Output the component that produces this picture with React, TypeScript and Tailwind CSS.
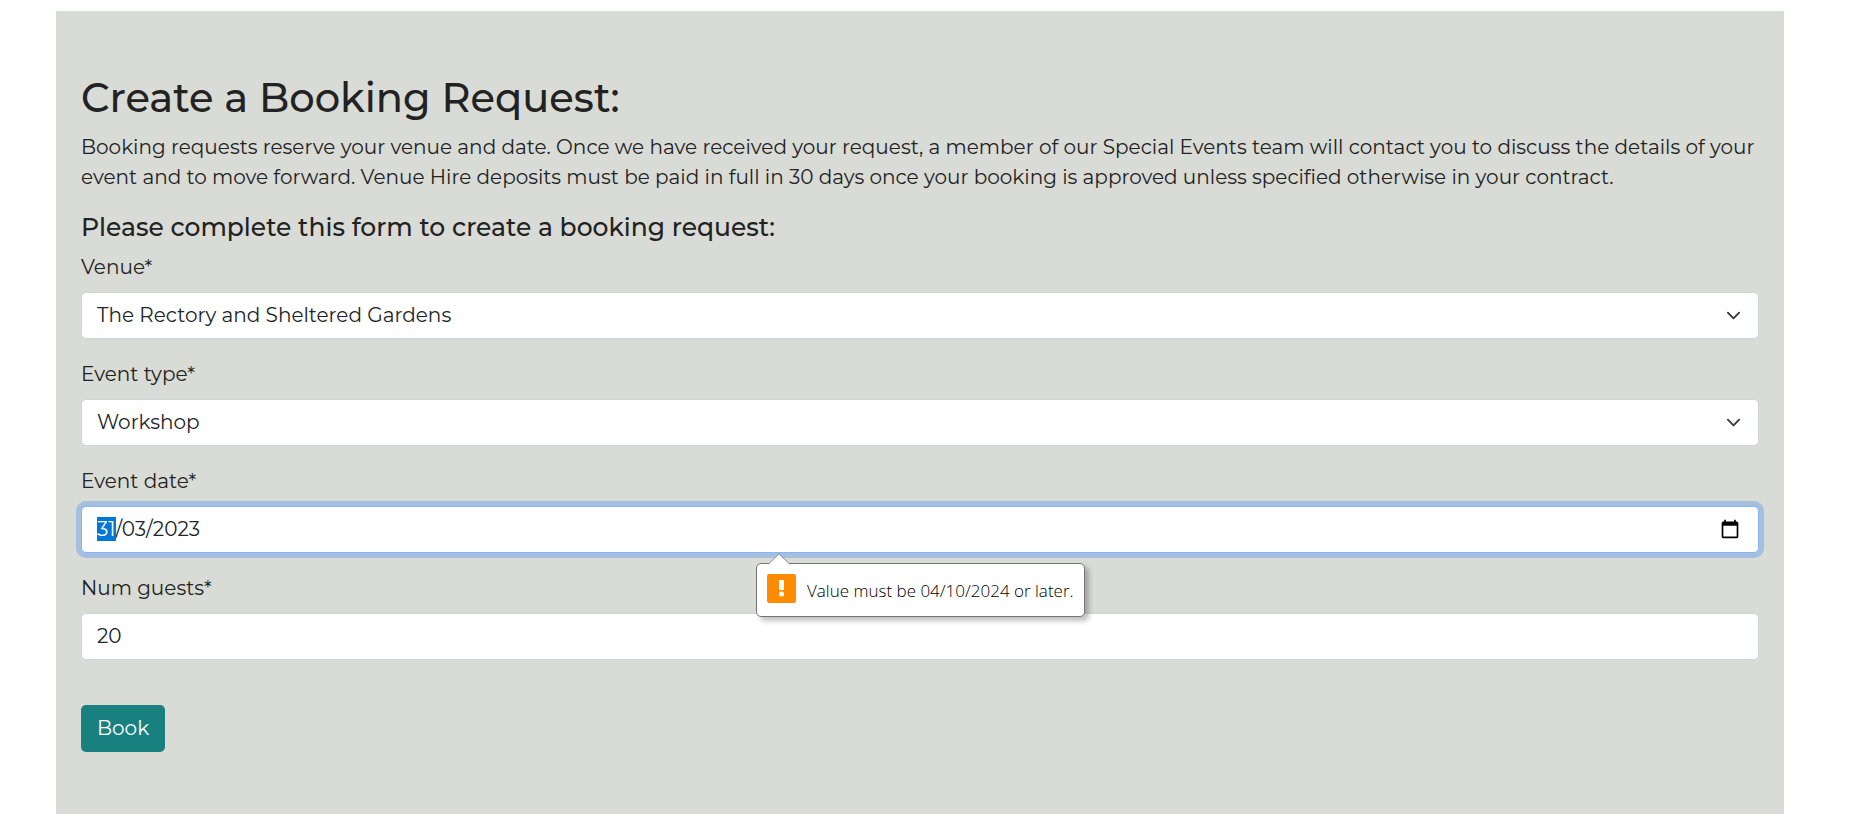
import { useEffect, useRef } from "react";
import type { ReactNode } from "react";

const controlClass =
  "h-[47px] w-full rounded-[5px] border border-[#ced4da] bg-white px-[15px] pb-[2px] text-xl font-normal text-[#212529] outline-none";

function Field({ id, label, children }: { id: string; label: string; children: ReactNode }) {
  return (
    <div className="relative mb-5">
      <label htmlFor={id} className="mb-[10px] block text-xl leading-[30px] font-normal">
        {label}
      </label>
      {children}
    </div>
  );
}

function SelectBox({ id, options }: { id: string; options: string[] }) {
  return (
    <div className="relative">
      <select id={id} className={`${controlClass} appearance-none`}>
        {options.map((option) => (
          <option key={option}>{option}</option>
        ))}
      </select>
      <svg
        viewBox="0 0 16 16"
        aria-hidden="true"
        className="pointer-events-none absolute top-4 right-[18px] size-[15px]"
      >
        <path d="M2 5l6 6 6-6" fill="none" stroke="#343a40" strokeWidth="2" strokeLinecap="round" strokeLinejoin="round" />
      </svg>
    </div>
  );
}

function ValidationBubble({ message }: { message: string }) {
  return (
    <div
      role="alert"
      className="absolute top-full left-[calc(50%-164px)] z-10 mt-[10px] flex h-[54px] items-center gap-[11px] rounded-[5px] border border-[#767676] bg-white pr-[10px] pl-[10px] whitespace-nowrap shadow-[4px_4px_5px_rgba(0,0,0,0.25)]"
    >
      <svg viewBox="0 0 22 12" aria-hidden="true" className="absolute -top-[11px] left-[11px] h-3 w-[22px]">
        <path d="M0.5 11 L11 0.8 L21.5 11 V12 H0.5 Z" fill="#fff" />
        <path d="M0.5 11 L11 0.8 L21.5 11" fill="none" stroke="#8a8a8a" />
      </svg>
      <svg viewBox="0 0 29 29" aria-hidden="true" className="mb-1 size-[29px]">
        <rect width="29" height="29" rx="2" fill="#ff8c00" />
        <rect x="12" y="6" width="5" height="10" fill="#fff" />
        <circle cx="14.5" cy="20" r="2.5" fill="#fff" />
      </svg>
      <span className="pt-[2px] font-['Open_Sans','Noto_Sans',sans-serif] text-[17px] leading-6 font-light text-black">
        {message}
      </span>
    </div>
  );
}

function DateField() {
  const inputRef = useRef<HTMLInputElement>(null);

  useEffect(() => {
    inputRef.current?.focus();
    inputRef.current?.setSelectionRange(0, 2);
  }, []);

  return (
    <Field id="event-date" label="Event date*">
      <div className="relative">
        <div className="flex h-[47px] items-center rounded-[5px] border border-[#86b7fe] bg-white pr-[18px] pb-[2px] pl-[15px] shadow-[0_0_0_5px_rgba(13,110,253,0.25)]">
          <input
            id="event-date"
            ref={inputRef}
            type="text"
            inputMode="numeric"
            defaultValue="31/03/2023"
            className="h-6 min-w-0 flex-1 bg-transparent text-xl leading-6 font-normal text-[#212529] outline-none selection:bg-[#0078d7] selection:text-white"
          />
          <button type="button" aria-label="Show date picker">
            <svg viewBox="0 0 24 24" aria-hidden="true" className="size-5 text-black" fill="currentColor">
              <path d="M20 3h-1V1h-2v2H7V1H5v2H4c-1.1 0-2 .9-2 2v16c0 1.1.9 2 2 2h16c1.1 0 2-.9 2-2V5c0-1.1-.9-2-2-2zm0 18H4V8h16v13z" />
            </svg>
          </button>
        </div>
        <ValidationBubble message="Value must be 04/10/2024 or later." />
      </div>
    </Field>
  );
}

export default function App() {
  return (
    <div className="bg-white pt-[11px] pr-[70px] pb-[22px] pl-14 font-[Montserrat,Inter,sans-serif] text-[#222222]">
      <main className="bg-[#d9dbd6] px-[25px] pt-[63px] pb-[62px]">
        <h1 className="mb-[10px] text-[40px] leading-[48px] font-medium">Create a Booking Request:</h1>
        <p className="mb-5 text-xl leading-[30px] font-normal">
          Booking requests reserve your venue and date. Once we have received your request, a member of our Special
          Events team will contact you to discuss the details of your event and to move forward. Venue Hire deposits
          must be paid in full in 30 days once your booking is approved unless specified otherwise in your contract.
        </p>
        <h2 className="mb-[10px] text-[25px] leading-[30px] font-medium">
          Please complete this form to create a booking request:
        </h2>
        <form onSubmit={(event) => event.preventDefault()}>
          <Field id="venue" label="Venue*">
            <SelectBox id="venue" options={["The Rectory and Sheltered Gardens"]} />
          </Field>
          <Field id="event-type" label="Event type*">
            <SelectBox id="event-type" options={["Workshop"]} />
          </Field>
          <DateField />
          <Field id="num-guests" label="Num guests*">
            <input id="num-guests" type="text" inputMode="numeric" defaultValue="20" className={controlClass} />
          </Field>
          <button
            type="submit"
            className="mt-[45px] block h-[47px] rounded-[5px] bg-[#198080] px-4 pb-[2px] text-xl font-normal text-white"
          >
            Book
          </button>
        </form>
      </main>
    </div>
  );
}
